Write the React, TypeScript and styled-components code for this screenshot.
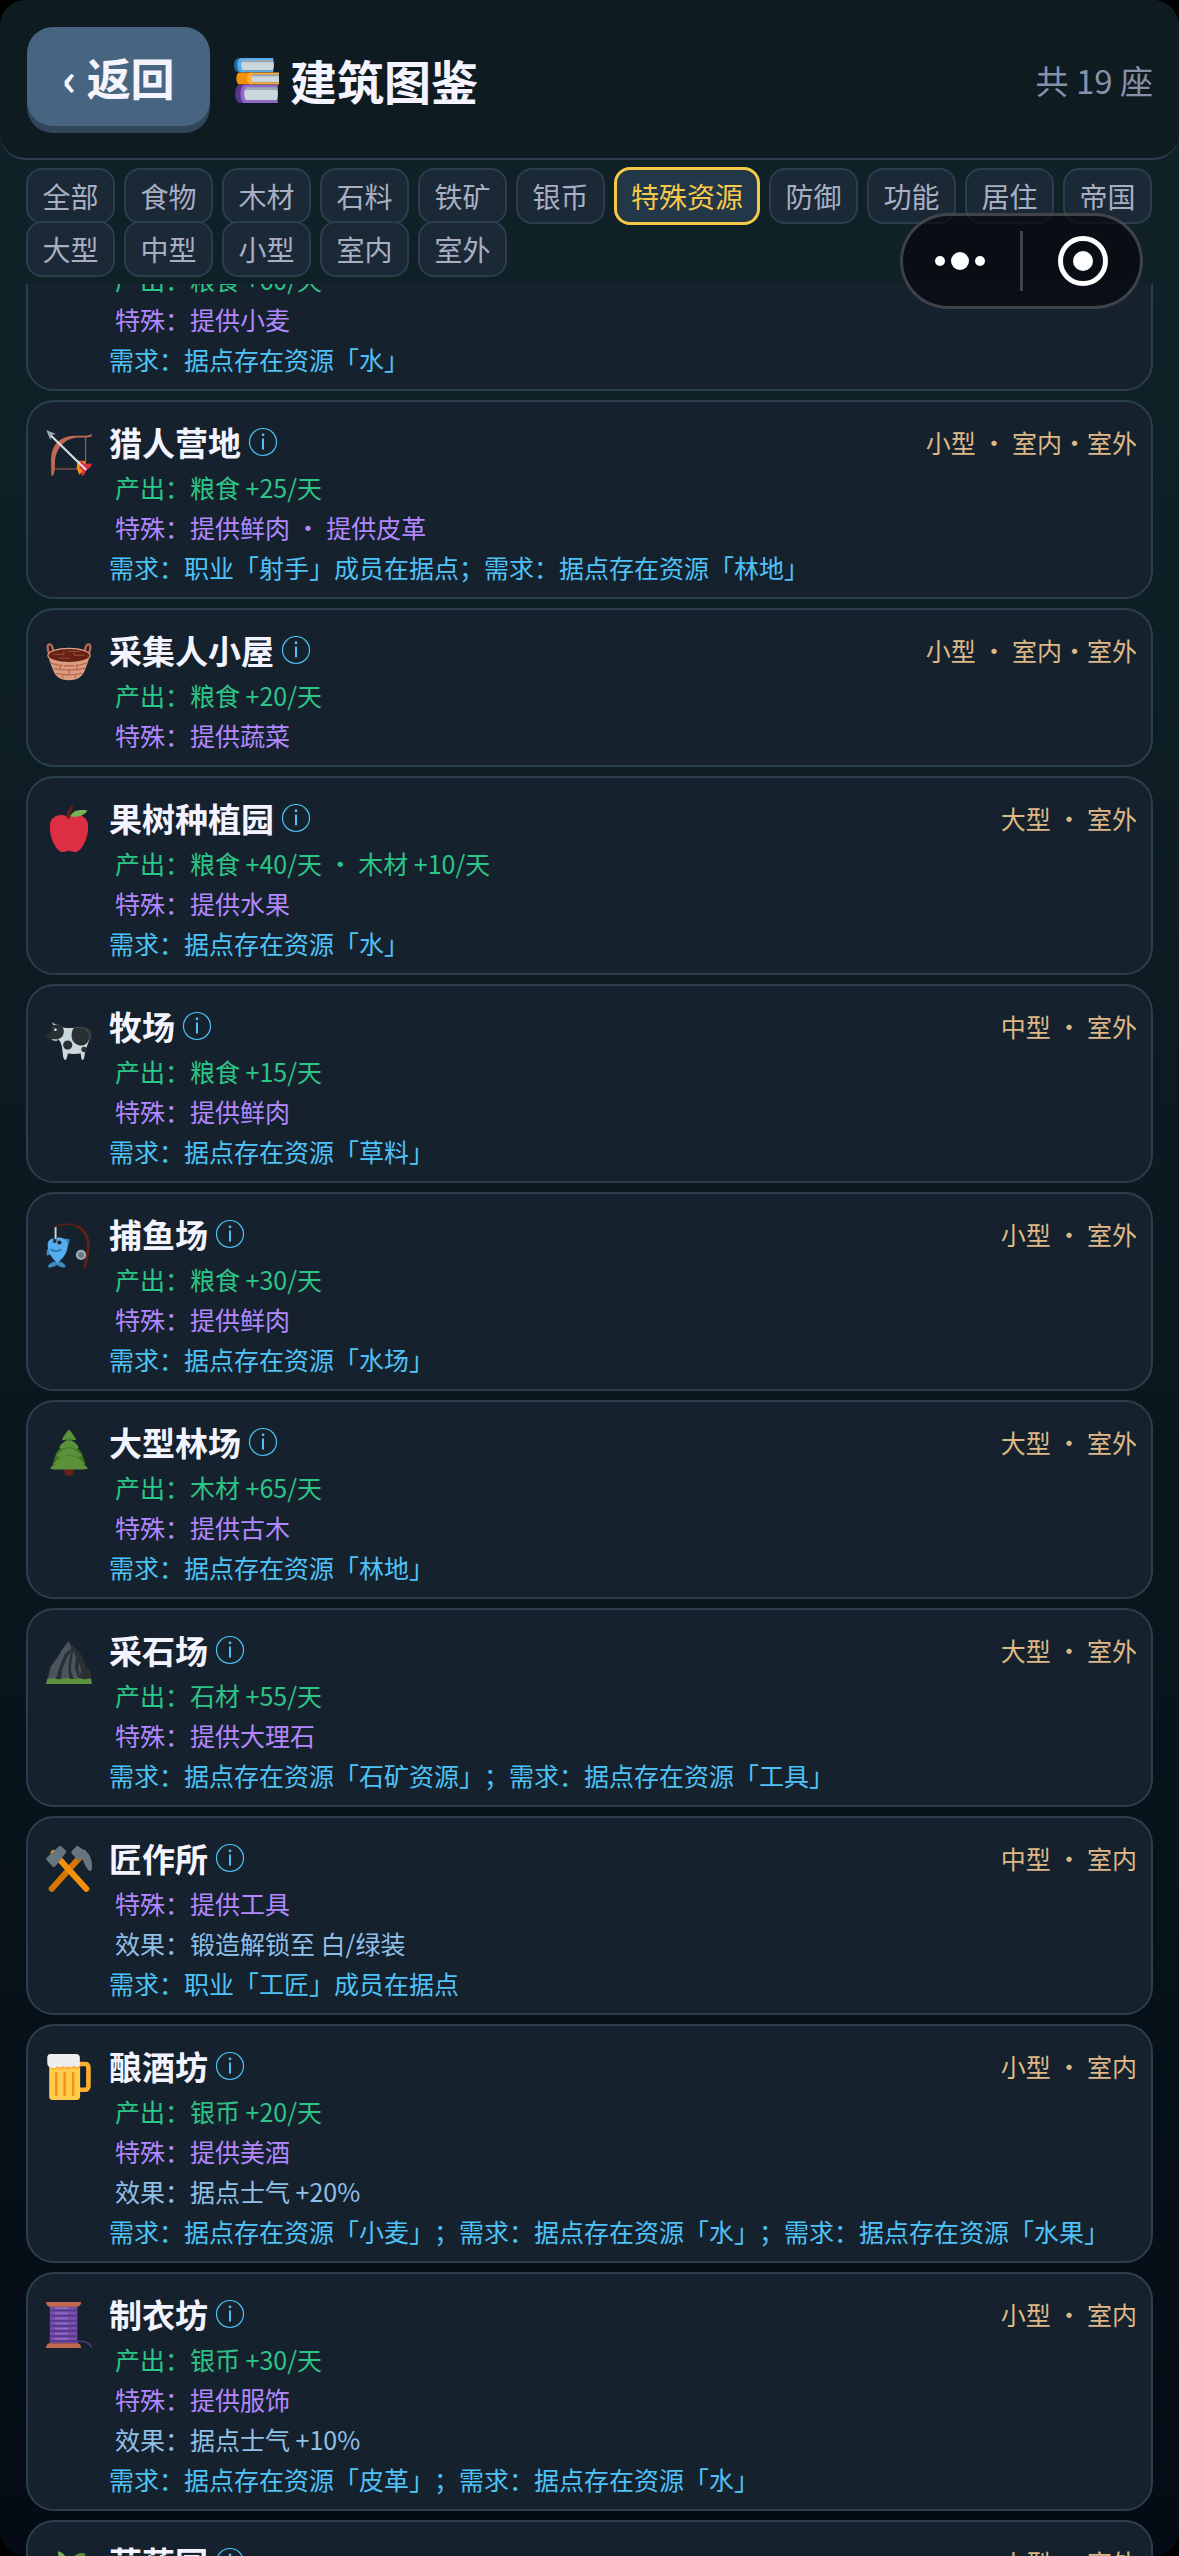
import React, { useLayoutEffect, useRef, useState } from "react";
import styled, { createGlobalStyle, css } from "styled-components";

const GlobalStyle = createGlobalStyle`
  *, *::before, *::after { box-sizing: border-box; }
  html, body { margin: 0; background: #000; }
  body, button {
    font-family: "Noto Sans CJK SC", "Noto Sans", sans-serif;
    text-spacing-trim: space-all;
  }
  h1, h2, p, ul { margin: 0; padding: 0; }
  button { margin: 0; border: 0; background: none; color: inherit; cursor: pointer; }
`;

/* ---------- layout ---------- */

const Screen = styled.main`
  display: flex;
  flex-direction: column;
  height: 100vh;
  overflow: hidden;
  border-radius: 26px;
  background: linear-gradient(180deg, #102127 0%, #0f2027 16%, #0a181e 55%, #040b14 100%);
`;

const Header = styled.header`
  display: flex;
  align-items: center;
  gap: 24px;
  padding: 27px 26px 25px 27px;
  border-bottom: 2px solid #2b3e4e;
  border-radius: 26px;
  background: #0e1b21;
`;

const BackButton = styled.button`
  display: flex;
  align-items: center;
  justify-content: center;
  gap: 10px;
  width: 183px;
  height: 99px;
  margin-bottom: 7px;
  border-radius: 26px;
  background: #476580;
  box-shadow: 0 7px 0 #30465a;
  color: #f4f4ff;
  font-size: 44px;
  font-weight: 700;
  line-height: 64px;
`;

const Title = styled.h1`
  display: flex;
  align-items: center;
  gap: 11px;
  flex: 1;
  color: #f4f4ff;
  font-size: 47px;
  font-weight: 700;
  line-height: 68px;
`;

const Count = styled.span`
  color: #8890a8;
  font-size: 33px;
  line-height: 48px;
`;

const Filters = styled.nav`
  display: flex;
  flex-wrap: wrap;
  align-items: center;
  column-gap: 9px;
  padding: 7px 26px 11px;
`;

const Chip = styled.button<{ $active: boolean }>`
  min-width: 89px;
  height: 56px;
  margin-bottom: -4px;
  padding: 0 14px;
  border: 2px solid #2b3e4e;
  border-radius: 16px;
  background: #1b2836;
  color: #a9afc3;
  font-size: 28px;
  line-height: 40px;
  white-space: nowrap;
  ${(p) =>
    p.$active &&
    css`
      height: 58px;
      border: 3px solid #f7c948;
      background: #223748;
      color: #f7c948;
    `}
`;

const List = styled.ul`
  display: flex;
  flex: 1;
  flex-direction: column;
  gap: 9px;
  min-height: 0;
  padding: 0 26px;
  overflow-y: auto;
  list-style: none;
  scrollbar-width: none;
`;

const Card = styled.li`
  display: flex;
  flex-shrink: 0;
  align-items: flex-start;
  gap: 17px;
  padding: 15px 14px 10px 18px;
  border: 2px solid #2b3e4e;
  border-radius: 28px;
  background: #15222e;
`;

const CardIcon = styled.span`
  flex-shrink: 0;
  width: 46px;
  padding-top: 13px;
`;

const CardBody = styled.div`
  flex: 1;
  min-width: 0;
`;

const CardHead = styled.div`
  display: flex;
  align-items: center;
  height: 50px;
`;

const Name = styled.h2`
  color: #f4f4ff;
  font-size: 33px;
  font-weight: 700;
  line-height: 48px;
`;

const InfoButton = styled.button`
  display: flex;
  margin-left: 7px;
  padding: 0;
`;

const Tag = styled.span`
  margin-left: auto;
  color: #deb887;
  font-size: 25px;
  line-height: 40px;
`;

type Kind = "output" | "special" | "effect" | "need";

const kindColor: Record<Kind, string> = {
  output: "#2ec487",
  special: "#b388ff",
  effect: "#90bfe8",
  need: "#4fc3f7",
};

const Line = styled.p<{ $kind: Kind }>`
  padding-left: ${(p) => (p.$kind === "need" ? 0 : 6)}px;
  color: ${(p) => kindColor[p.$kind]};
  font-size: 25px;
  line-height: 40px;
`;

const Capsule = styled.div`
  position: fixed;
  top: 213px;
  right: 36px;
  display: flex;
  align-items: center;
  width: 243px;
  height: 96px;
  border: 3px solid rgba(255, 255, 255, 0.22);
  border-radius: 48px;
  background: rgba(4, 4, 10, 0.65);
`;

const CapsuleButton = styled.button`
  display: flex;
  flex: 1;
  align-items: center;
  justify-content: center;
  height: 90px;
  padding: 0;
`;

const CapsuleDivider = styled.span`
  width: 3px;
  height: 60px;
  background: rgba(255, 255, 255, 0.22);
`;

const Glyph = styled.svg<{ $size: number }>`
  display: block;
  flex-shrink: 0;
  width: ${(p) => p.$size}px;
  height: ${(p) => p.$size}px;
`;

/* ---------- drawings (36 x 36 grid) ---------- */

const art: Record<string, React.ReactNode> = {
  books: (
    <>
      <path fill="#269" d="M4 0h6v11.4H4C1.500 11.400 0 8.800 0 5.700S1.500 0 4 0z" />
      <path fill="#55acee" d="M6 0h25.500v1.600H8v8.200h23.500v1.600H6C4 11.400 2.600 9 2.600 5.700S4 0 6 0z" />
      <path fill="#ccd6dd" d="M8 1.600h23.200c1 2.200 1 6 0 8.200H8c-3-1-3-7.200 0-8.200z" />
      <path fill="#99aab5" d="M6.500 1.600h24.700l.4 1.700H6z" />
      <path fill="#f4900c" d="M4.500 11.600H14v9.500H4.500C2.800 21.100 1.900 19 1.900 16.300s.9-4.700 2.600-4.700z" />
      <path fill="#ffac33" d="M13.500 11.600H36v1.800H15v6H36v1.700H13.500c-1.800 0-3-2-3-4.800s1.200-4.700 3-4.700z" />
      <path fill="#ccd6dd" d="M15.500 13.400H36v6H15.500c-2.300-.8-2.300-5.200 0-6z" />
      <path fill="#99aab5" d="M14 13.400h22v1.400H13.600z" />
      <path fill="#553788" d="M5 21.300h9V36H5c-2.600 0-4-3.300-4-7.300s1.400-7.400 4-7.400z" />
      <path fill="#9266cc" d="M9 21.300h26v2.200H10v10.300h25V36H9c-2.500 0-3.800-3.300-3.800-7.300s1.300-7.400 3.800-7.400z" />
      <path fill="#ccd6dd" d="M10 23.500h24.600c.7 3 .7 7.300 0 10.300H10c-2.500-1.500-2.500-8.800 0-10.300z" />
      <path fill="#99aab5" d="M9 23.500h25.600l.3 2H8.500z" />
    </>
  ),
  wheat: (
    <path fill="#f4900c" d="M17 36V14h2v22zM18 0c3 4 3 7 0 10-3-3-3-6 0-10zM9 8c5 1 8 4 8 9-5-1-8-4-8-9zm18 0c-5 1-8 4-8 9 5-1 8-4 8-9z" />
  ),
  bow: (
    <>
      <path fill="none" stroke="#a5614e" strokeWidth=".9" d="M31 4.500v26H4" />
      <path fill="#c1694f" d="M35.800 3.200c.4 1-.2 2-1.400 2.300-1.800.5-4 .3-7 .3-5.400 0-10.400 1.200-14.200 5-4.200 4.200-6.200 9.400-6.200 15.400 0 3-.1 5.700-.8 7.800-.4 1.200-1.200 2-2.200 1.800.6-3.300-.2-7.600 0-13.200.2-5 1.600-9.600 4.800-13C12.800 5.800 18 4.500 23.800 4.500c4.900 0 8.400.6 12-1.300z" />
      <path fill="#f4900c" d="M24.500 24l6 .3.500 6.400-5 4.300-2-5.200z" />
      <path fill="#dd2e44" d="M27 23.500l3.300 3.200 5.300-.4-.3 2.200-3.800 3.200-1.800 3.800-2.200.5.800-4.500-2-2z" />
      <path stroke="#d5dfe5" strokeWidth="1.700" d="M3 3.500l28.500 27.800" />
      <path fill="#99aab5" d="M.2 0l7.600 3.200-3.600.8-.8 3.900z" />
    </>
  ),
  basket: (
    <>
      <path fill="none" stroke="#c1694f" strokeWidth="1.800" d="M3.800 15C1 10 .4 5 2.600 5c1.600 0 2.700 2.500 3 5.500M32.200 15c2.800-5 3.400-10 1.200-10-1.600 0-2.700 2.500-3 5.500" />
      <path fill="#d99e82" d="M1.800 13.500h32.400C33.500 18 32 21 30.500 25c-1.800 5-5.500 8-12.500 8S7.300 30 5.500 25C4 21 2.500 18 1.800 13.500z" />
      <ellipse cx="18" cy="13.700" rx="17" ry="6" fill="#d99e82" />
      <ellipse cx="18" cy="13.700" rx="16" ry="5" fill="#662113" />
      <path fill="none" stroke="#8c4334" strokeWidth="1" d="M6 12.800h8M17 10.500h10M10 15.700h9M22 13.500h8M14 10.500v3M22 10.500v3" />
      <path fill="none" stroke="#c1694f" strokeWidth="1.100" d="M4 19.500c3 1.600 6 1.800 9 2M23 21.500c3-.2 6-.6 9-2M11 21.500v2.700M24 21.500v3M6 23.500c3 1.500 18 2.400 24.500 0M14 21.700h8M18 25v3M8 27.500c4 1.600 15 1.600 20 0M13 28.500v3M23 28.500v3" />
    </>
  ),
  apple: (
    <>
      <path fill="#dd2e44" d="M24 7c-3 0-3 1-6 1s-3-1-6-1c-4 0-9 2-9 9 0 11 6 20 10 20 3 0 3-1 5-1s2 1 5 1c4 0 10-9 10-20 0-7-5-9-9-9z" />
      <path fill="#662113" d="M17.600 10c-.8 0-1.600-.6-1.500-2 .2-3 1.800-6.500 4.100-8 .8-.2 1.300.6.900 1.300-1.200 2-2 4-2.200 6.600-.1 1.400-.5 2.100-1.300 2.100z" />
      <path fill="#77b255" d="M19 8c2-4 5.500-5.500 13.500-4.500C30.500 7 25 9.500 19 8z" />
    </>
  ),
  cow: (
    <>
      <path fill="#292f33" d="M31 10.500c3.500-.5 5 2 5 6 0 3-.3 5-1 6.500-.8.300-1.200-.3-1-1.200.5-3 .6-7-3-9z" />
      <path fill="#ccd6dd" d="M11 9.500c4 2 8 1.500 13 1 6-.6 10 1.500 10 7 0 5-2.500 8-3.300 12-.4 2-.7 6.300-1.900 6.500-1.300.2-1.300-2.500-1.600-5-3 .3-6.500.5-10 0-.6 2.500-1 5-2.200 5-1.400 0-1.800-4-2.100-7C12.500 24 11.500 21 9 19.500c-1.500-1-1-8 2-10z" />
      <path fill="#ccd6dd" d="M5 6.200c1 1.800 3 1.800 4.500 2.200l1 2-2.500.3C6.500 9.800 5 8.500 5 6.200z" />
      <path fill="#292f33" d="M5.200 9c3.800-1.600 8.300-.5 8.700 4 .3 4-1.800 6.500-5 6.500-2 0-3 1-5.400.7C1 20 0 18.500.3 17c.4-1.700 3-2.300 3.700-4 .5-1.300.2-3 1.200-4z" />
      <path fill="#99aab5" d="M4 19.500h5v1.600H6z" />
      <circle cx="7.400" cy="12.300" r="1" fill="#e1e8ed" />
      <path fill="#292f33" d="M22 10.700c5-.8 11.500-.7 12 6.500 0 4-2.500 7.500-6.500 7.500S20 21.500 20 17c0-2.500.6-4.800 2-6.300z" />
      <circle cx="17" cy="24.300" r="3.600" fill="#292f33" />
      <circle cx="29.800" cy="27.800" r="2.100" fill="#292f33" />
    </>
  ),
  fishing: (
    <>
      <path fill="none" stroke="#662113" strokeLinecap="round" strokeWidth="1" d="M7 4c5-3 14-3.300 19 .2" />
      <path fill="none" stroke="#662113" strokeLinecap="round" strokeWidth="2" d="M24 3.200c8 3.500 9.500 11 9 18-.3 5-1.300 10-2.800 14" />
      <path fill="#3b88c3" d="M12 14c2-1.500 4.500-.5 6.500-.5 0 3-1.500 6-4.500 9zM2 20c-1.500 2-2 5-1.200 6.500L5 25zM7 31c-3 .5-5 2-5.700 4.500 3 .3 5.400-.4 7.200-2 1.500 1.500 4 2.500 7 2-.6-3-3-4.500-6.500-5z" />
      <path fill="#55acee" d="M8.500 12.300c4-.8 8 1.500 8.500 5 .5 6-4 12-8.300 14.800C4 28 1 22.500 1.300 17.500 1.500 14.500 4 12.600 6 13l-.5 3.500L8 16z" />
      <path fill="none" stroke="#2a77ad" strokeLinecap="round" strokeWidth="1.400" d="M4 21.500c2 1.600 5 1.600 7.500.2" />
      <circle cx="10.500" cy="16" r="1.600" fill="#1b1f22" />
      <path stroke="#ccd6dd" strokeWidth="1.500" d="M7.500 4v9.500" />
      <path stroke="#292f33" strokeWidth="1" d="M6.600 13v2.500" />
      <circle cx="27.400" cy="25.800" r="4" fill="#99aab5" />
      <circle cx="27.400" cy="25.800" r="2.200" fill="#66757f" />
    </>
  ),
  tree: (
    <>
      <path fill="#662113" d="M14.500 29h7v5.500c0 2-7 2-7 0z" />
      <path fill="#3e721d" d="M18 5l10 13 2 6 1.500 6H4.500L6 24l2-6z" />
      <path fill="#5c913b" d="M18 0c1 0 2 2 5.500 7-.8 1.300-2 1.300-3 .7-1.500-.6-3.500-.6-5 0-1 .6-2.200.6-3 -.7C16 2 17 0 18 0z" />
      <path fill="#5c913b" d="M18 8.500c3 0 5 1 7.700 5.200-1 1.300-2.700 1.300-4.200.5-2-1-5-1-7 0-1.500.8-3.200.8-4.200-.5C13 9.500 15 8.500 18 8.500z" />
      <path fill="#5c913b" d="M18 14.300c4 0 7 2 9.600 6-1.500 1.200-3.600 1-5.300.2-2.600-1.300-6-1.300-8.600 0-1.700.8-3.800 1-5.300-.2C11 16.300 14 14.300 18 14.300z" />
      <path fill="#5c913b" d="M18 20c5 0 8.500 2 12 6.500-1.600 1.500-4.500 1.300-6.500.4-3-1.500-8-1.500-11 0-2 .9-4.900 1.100-6.500-.4C9.500 22 13 20 18 20z" />
      <path fill="#5c913b" d="M18 25.500c6 0 10 .5 14.800 4.200 0 1.300-5.300 1.300-14.800 1.300S3.200 31 3.200 29.700C8 26 12 25.500 18 25.500z" />
    </>
  ),
  mountain: (
    <>
      <path fill="#292f33" d="M17.500 2L22 7l5.500 6L31 22l4 4 1 9H0l3-12 4-6 4-4z" />
      <path fill="#4b545d" d="M17.500 2.500L20 8l-5.500 5-3.700 9-3 10H1.500L4 22l4-5 4-7zM20 9.500l-2 8-.5 8 1 7h-7l1.500-9 4-9zM21.500 10l2 6-1 7 3 9h-4l-2-7 .5-7zM26 19l1.500 6-1 5-1-6z" />
      <path fill="#5c913b" d="M0 36l1-4c4-1.500 7 .6 10 .2s5-1.600 8-.4 5-1.200 9 0 5-.3 7.200 0L36 36z" />
    </>
  ),
  hammers: (
    <>
      <path stroke="#d67503" strokeLinecap="round" strokeWidth="4.800" d="M29.500 5.500L4.500 33.500" />
      <path stroke="#f4900c" strokeLinecap="round" strokeWidth="4.800" d="M6 5.500l25.500 28" />
      <path fill="#66757f" d="M10 .3c.9-.6 1.800-.3 2.600.4l2.600 2.700c.8.800.6 1.500 0 2.300l-7.500 9.700c-.9 1.100-1.900 1.300-2.900.3l-4-4.300c-.9-1-.8-2 .2-2.800z" />
      <path fill="#66757f" d="M25.500.4c-.8-.6-1.400-.4-2 .2l-3.200 3.200c-.7.800-.5 1.700 0 2.300l4.200 4.600c.7.700 1.500.8 2.200.2l1.200-1.200c1.800 2 2.500 5.500 4.700 8.500 1 1.300 2.500 2 3 .6.800-3 .4-6.500-.7-9.500-1-2.800-2.500-4.500-4.600-5.500z" />
    </>
  ),
  beer: (
    <>
      <path fill="none" stroke="#ffac33" strokeWidth="3.600" d="M26 7.800h4.500c1.700 0 2.700 1 2.700 2.700v14.500c0 1.700-1 3-2.700 3H26" />
      <path fill="#ffcc4d" d="M2.500 7h24.200v26c0 2-1 3-3 3H5.500c-2 0-3-1-3-3z" />
      <path stroke="#f4900c" strokeLinecap="round" strokeWidth="1.900" d="M8 15v17M14.600 15v17M21.200 15v17" />
      <path fill="#ffac33" d="M2.500 8h24.200v3l-2.500.5-3-.4-3.400.9-3.300-.8-3 .8-3-.8-3 .8-3-1z" />
      <path fill="#eee" d="M3.500 0h20c2 0 3 1 3 3v5c0 2.500-3.500 3-4.700.9-1 2-3.300 2-4.300.2-1 1.600-3 1.600-4 0-1 1.700-3.500 1.700-4.600.3C8 12 1 11.500 1 7V3c0-2 .8-3 2.500-3z" />
    </>
  ),
  thread: (
    <>
      <path fill="none" stroke="#553788" strokeWidth="1.300" d="M23 31c6-.8 11 .3 12.500 4.500" />
      <path fill="#744eaa" d="M3 3.500h21.500V32H3z" />
      <path fill="#553788" d="M3 6h21.500v1.300H3zM3 10h21.500v1.300H3zM3 14h21.500v1.300H3zM3 18h21.500v1.300H3zM3 22h21.500v1.300H3zM3 26h21.500v1.300H3zM3 30h21.500v1.300H3z" />
      <path fill="#9266cc" d="M7 4.200h10.500v1.300H7zM7 8.200h10.500v1.300H7zM7 12.200h10.500v1.300H7zM7 16.200h10.500v1.300H7zM7 20.200h10.500v1.300H7zM7 24.200h10.500v1.300H7zM7 28.200h10.500v1.300H7z" />
      <path fill="#c1694f" d="M0 0h27.500c0 1.800-1 3.700-3 3.700H3C1 3.700 0 1.800 0 0zM3 32.200h21.500c2 0 3 2 3 3.800H0c0-1.800 1-3.800 3-3.800z" />
    </>
  ),
  herb: (
    <>
      <path fill="#77b255" d="M9.500 1C14 2 17 6 17 12c-5-2-8-6-7.500-11zM35 12c-6-3-12 0-14 7 6 1 11-1 14-7z" />
      <path fill="#5c913b" d="M31 3c-5-2-11 1-12 9 6 0 10-3 12-9zM2 14c6-2 11 1 13 8-6 1-11-2-13-8zM16 12h2l1 24h-2z" />
    </>
  ),
};

function Icon({ name, size }: { name: string; size: number }) {
  return (
    <Glyph $size={size} viewBox="0 0 36 36" fill="none" aria-hidden="true">
      {art[name]}
    </Glyph>
  );
}

/* ---------- data ---------- */

const filters = [
  "全部", "食物", "木材", "石料", "铁矿", "银币", "特殊资源", "防御",
  "功能", "居住", "帝国", "大型", "中型", "小型", "室内", "室外",
];

type Building = { icon: string; name: string; tag: string; lines: [Kind, string][] };

const buildings: Building[] = [
  {
    icon: "wheat", name: "农田", tag: "大型 · 室外",
    lines: [["output", "产出：粮食 +60/天"], ["special", "特殊：提供小麦"], ["need", "需求：据点存在资源「水」"]],
  },
  {
    icon: "bow", name: "猎人营地", tag: "小型 · 室内·室外",
    lines: [["output", "产出：粮食 +25/天"], ["special", "特殊：提供鲜肉 · 提供皮革"], ["need", "需求：职业「射手」成员在据点；需求：据点存在资源「林地」"]],
  },
  {
    icon: "basket", name: "采集人小屋", tag: "小型 · 室内·室外",
    lines: [["output", "产出：粮食 +20/天"], ["special", "特殊：提供蔬菜"]],
  },
  {
    icon: "apple", name: "果树种植园", tag: "大型 · 室外",
    lines: [["output", "产出：粮食 +40/天 · 木材 +10/天"], ["special", "特殊：提供水果"], ["need", "需求：据点存在资源「水」"]],
  },
  {
    icon: "cow", name: "牧场", tag: "中型 · 室外",
    lines: [["output", "产出：粮食 +15/天"], ["special", "特殊：提供鲜肉"], ["need", "需求：据点存在资源「草料」"]],
  },
  {
    icon: "fishing", name: "捕鱼场", tag: "小型 · 室外",
    lines: [["output", "产出：粮食 +30/天"], ["special", "特殊：提供鲜肉"], ["need", "需求：据点存在资源「水场」"]],
  },
  {
    icon: "tree", name: "大型林场", tag: "大型 · 室外",
    lines: [["output", "产出：木材 +65/天"], ["special", "特殊：提供古木"], ["need", "需求：据点存在资源「林地」"]],
  },
  {
    icon: "mountain", name: "采石场", tag: "大型 · 室外",
    lines: [["output", "产出：石材 +55/天"], ["special", "特殊：提供大理石"], ["need", "需求：据点存在资源「石矿资源」；需求：据点存在资源「工具」"]],
  },
  {
    icon: "hammers", name: "匠作所", tag: "中型 · 室内",
    lines: [["special", "特殊：提供工具"], ["effect", "效果：锻造解锁至 白/绿装"], ["need", "需求：职业「工匠」成员在据点"]],
  },
  {
    icon: "beer", name: "酿酒坊", tag: "小型 · 室内",
    lines: [["output", "产出：银币 +20/天"], ["special", "特殊：提供美酒"], ["effect", "效果：据点士气 +20%"], ["need", "需求：据点存在资源「小麦」；需求：据点存在资源「水」；需求：据点存在资源「水果」"]],
  },
  {
    icon: "thread", name: "制衣坊", tag: "小型 · 室内",
    lines: [["output", "产出：银币 +30/天"], ["special", "特殊：提供服饰"], ["effect", "效果：据点士气 +10%"], ["need", "需求：据点存在资源「皮革」；需求：据点存在资源「水」"]],
  },
  {
    icon: "herb", name: "草药园", tag: "小型 · 室外",
    lines: [["special", "特殊：提供草药"], ["need", "需求：据点存在资源「水」"]],
  },
];

const INITIAL_SCROLL = 92;

function BuildingCard({ item }: { item: Building }) {
  return (
    <Card>
      <CardIcon>
        <Icon name={item.icon} size={46} />
      </CardIcon>
      <CardBody>
        <CardHead>
          <Name>{item.name}</Name>
          <InfoButton type="button" aria-label={`${item.name}详情`}>
            <Glyph $size={30} viewBox="0 0 30 30" fill="none" stroke="#4fc3f7" aria-hidden="true">
              <circle cx="15" cy="15" r="13.500" strokeWidth="1.200" />
              <path strokeWidth="2" d="M15 11.500v11" />
              <circle cx="15" cy="7.800" r="1.400" fill="#4fc3f7" stroke="none" />
            </Glyph>
          </InfoButton>
          <Tag>{item.tag}</Tag>
        </CardHead>
        {item.lines.map(([kind, text]) => (
          <Line key={text} $kind={kind}>{text}</Line>
        ))}
      </CardBody>
    </Card>
  );
}

export default function App() {
  const [active, setActive] = useState("特殊资源");
  const listRef = useRef<HTMLUListElement>(null);

  useLayoutEffect(() => {
    if (listRef.current) listRef.current.scrollTop = INITIAL_SCROLL;
  }, []);

  return (
    <>
      <GlobalStyle />
      <Screen>
        <Header>
          <BackButton type="button">
            <span>‹</span>
            <span>返回</span>
          </BackButton>
          <Title>
            <Icon name="books" size={45} />
            建筑图鉴
          </Title>
          <Count>共 19 座</Count>
        </Header>
        <Filters aria-label="建筑筛选">
          {filters.map((f) => (
            <Chip key={f} type="button" $active={f === active} aria-pressed={f === active} onClick={() => setActive(f)}>
              {f}
            </Chip>
          ))}
        </Filters>
        <List ref={listRef}>
          {buildings.map((b) => (
            <BuildingCard key={b.name} item={b} />
          ))}
        </List>
      </Screen>
      <Capsule>
        <CapsuleButton type="button" aria-label="更多">
          <Glyph $size={56} viewBox="0 0 56 56" fill="#fff" aria-hidden="true">
            <circle cx="6" cy="28" r="5" />
            <circle cx="26" cy="28" r="9" />
            <circle cx="46" cy="28" r="5" />
          </Glyph>
        </CapsuleButton>
        <CapsuleDivider />
        <CapsuleButton type="button" aria-label="关闭">
          <Glyph $size={56} viewBox="0 0 56 56" fill="none" aria-hidden="true">
            <circle cx="29" cy="28" r="22.500" stroke="#fff" strokeWidth="5" />
            <circle cx="29" cy="28" r="10" fill="#fff" />
          </Glyph>
        </CapsuleButton>
      </Capsule>
    </>
  );
}
